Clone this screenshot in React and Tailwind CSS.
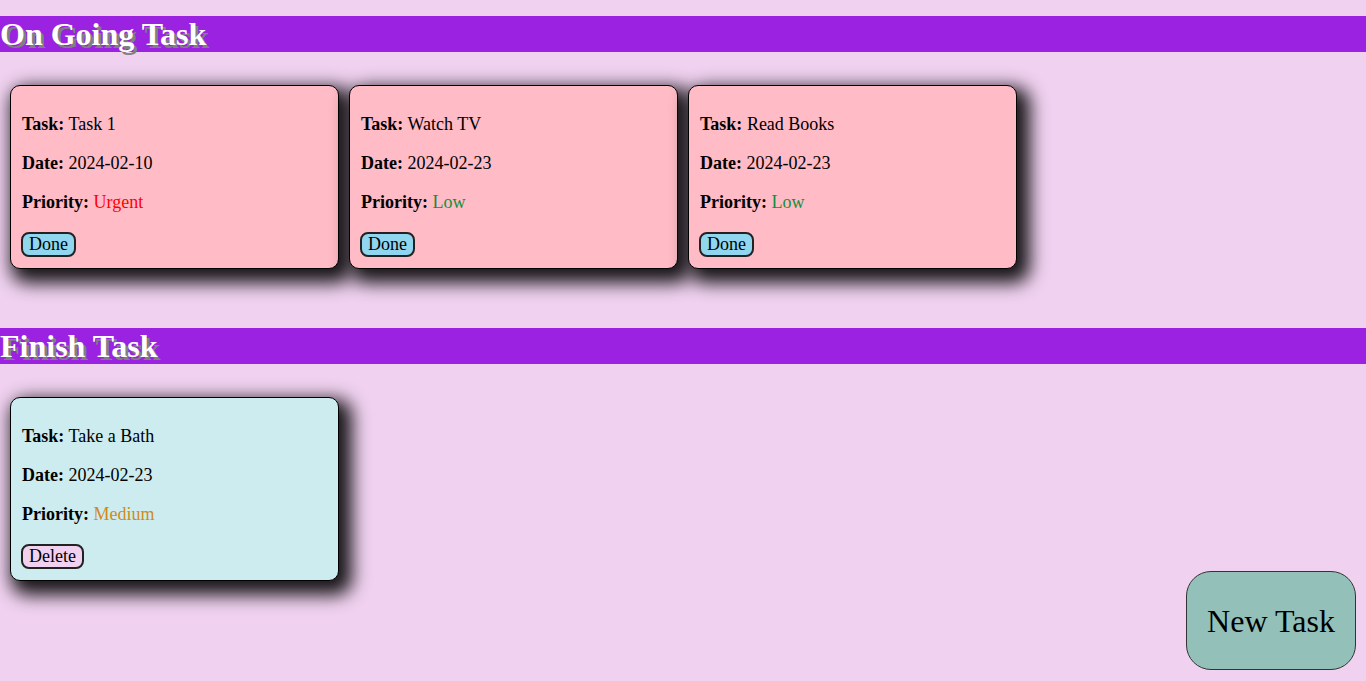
const ongoing = [
  { task: 'Task 1', date: '2024-02-10', priority: 'Urgent' },
  { task: 'Watch TV', date: '2024-02-23', priority: 'Low' },
  { task: 'Read Books', date: '2024-02-23', priority: 'Low' },
]

const finished = [{ task: 'Take a Bath', date: '2024-02-23', priority: 'Medium' }]

const priorityColor = {
  Urgent: 'text-[#ff0000]',
  Low: 'text-[#11903a]',
  Medium: 'text-[#d08a1a]',
}

function Heading({ children }) {
  return (
    <div className="h-9 bg-[#9a22e0] flex items-center">
      <h1 className="text-[32px] leading-9 font-bold text-white [text-shadow:3px_3px_0_#808080]">
        {children}
      </h1>
    </div>
  )
}

function TaskCard({ item, done }) {
  return (
    <div
      className={`w-[329px] h-[184px] m-[5px] rounded-[10px] border border-black pt-[28px] px-[11px] shadow-[7px_8px_18px_6px_rgba(0,0,0,0.9)] ${
        done ? 'bg-[#cdecef]' : 'bg-[#ffbbc6]'
      }`}
    >
      <p className="leading-[20px]">
        <b>Task:</b> {item.task}
      </p>
      <p className="leading-[20px] mt-[19px]">
        <b>Date:</b> {item.date}
      </p>
      <p className="leading-[20px] mt-[19px]">
        <b>Priority:</b> <span className={priorityColor[item.priority]}>{item.priority}</span>
      </p>
      <button
        className={`mt-[20px] -ml-px h-[25px] px-[6px] border-2 border-[#222] rounded-[8px] leading-[21px] ${
          done ? 'bg-[#f0d2f0]' : 'bg-[#8fd6ee]'
        }`}
      >
        {done ? 'Delete' : 'Done'}
      </button>
    </div>
  )
}

export default function App() {
  return (
    <div className="min-h-[681px] bg-[#f0d2f0] pt-4 text-[18px] text-black font-['Liberation_Serif',serif]">
      <Heading>On Going Task</Heading>
      <div className="flex px-[5px] mt-[28px]">
        {ongoing.map((t) => (
          <TaskCard key={t.task} item={t} />
        ))}
      </div>
      <div className="mt-[54px]">
        <Heading>Finish Task</Heading>
      </div>
      <div className="flex px-[5px] mt-[28px]">
        {finished.map((t) => (
          <TaskCard key={t.task} item={t} done />
        ))}
      </div>
      <button className="fixed right-[10px] bottom-[11px] w-[170px] h-[99px] rounded-[25px] border border-[#333] bg-[#93c0b8] text-[32px]">
        New Task
      </button>
    </div>
  )
}
